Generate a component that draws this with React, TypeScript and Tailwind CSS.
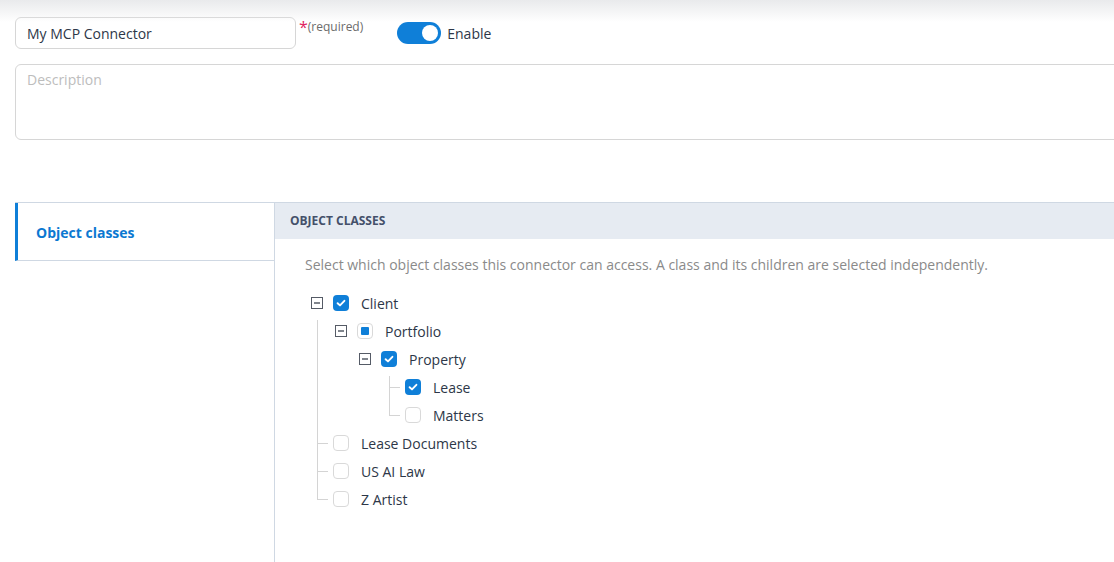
import React from 'react';

type Check = 'on' | 'off' | 'mixed';
type Cell = 'blank' | 'v' | 'vtop' | 'tee' | 'teetop' | 'end' | 'exp';

type Row = { label: string; check: Check; cells: Cell[] };

const rows: Row[] = [
  { label: 'Client', check: 'on', cells: ['exp'] },
  { label: 'Portfolio', check: 'mixed', cells: ['vtop', 'exp'] },
  { label: 'Property', check: 'on', cells: ['v', 'blank', 'exp'] },
  { label: 'Lease', check: 'on', cells: ['v', 'blank', 'blank', 'teetop'] },
  { label: 'Matters', check: 'off', cells: ['v', 'blank', 'blank', 'end'] },
  { label: 'Lease Documents', check: 'off', cells: ['tee'] },
  { label: 'US AI Law', check: 'off', cells: ['tee'] },
  { label: 'Z Artist', check: 'off', cells: ['end'] },
];

// connector lines / expander drawn per 24x28 cell
function TreeCell({ type }: { type: Cell }) {
  const line = '#d4d4d4';
  return (
    <svg width="24" height="28" viewBox="0 0 24 28" className="shrink-0">
      {(type === 'v' || type === 'tee') && <line x1="12.5" y1="0" x2="12.5" y2="28" stroke={line} />}
      {(type === 'vtop' || type === 'teetop') && <line x1="12.5" y1="3" x2="12.5" y2="28" stroke={line} />}
      {type === 'end' && <line x1="12.5" y1="0" x2="12.5" y2="14.5" stroke={line} />}
      {(type === 'tee' || type === 'teetop' || type === 'end') && (
        <line x1="12" y1="14.5" x2="23" y2="14.5" stroke={line} />
      )}
      {type === 'exp' && (
        <g>
          <rect x="6.5" y="8.5" width="11" height="11" fill="#fff" stroke="#555b66" />
          <line x1="9" y1="14" x2="15" y2="14" stroke="#3c4350" strokeWidth="1.3" />
        </g>
      )}
    </svg>
  );
}

function Checkbox({ state }: { state: Check }) {
  if (state === 'on') {
    return (
      <span className="ml-1 flex h-4 w-4 shrink-0 items-center justify-center rounded-[4px] bg-[#0f7fd8]">
        <svg width="12" height="12" viewBox="0 0 12 12">
          <path d="M2.6 6.2 L5 8.4 L9.4 3.8" fill="none" stroke="#fff" strokeWidth="1.9" strokeLinecap="round" strokeLinejoin="round" />
        </svg>
      </span>
    );
  }
  return (
    <span className="ml-1 flex h-4 w-4 shrink-0 items-center justify-center rounded-[4px] border border-[#d9d9d9] bg-white">
      {state === 'mixed' && <span className="h-2 w-2 rounded-[1px] bg-[#0f7fd8]" />}
    </span>
  );
}

function App() {
  return (
    <div className="relative h-[562px] w-[1114px] overflow-hidden bg-white font-['Open_Sans',sans-serif] text-[#2d3748]">
      {/* header shadow from above */}
      <div className="pointer-events-none absolute inset-x-0 top-0 z-10 h-[22px] bg-gradient-to-b from-[#e9eaec] to-white/0" />

      <div className="w-[1200px] pl-[15px] pt-[17px]">
        {/* Name + enable */}
        <div className="flex items-start">
          <div className="flex h-8 w-[281px] items-center rounded-[6px] border border-[#d6d6d6] pl-[11px] text-[14px]">
            My MCP Connector
          </div>
          <span className="ml-[3px] mt-[1px] text-[16px] leading-[18px] text-[#e0245e]">*</span>
          <span className="mt-[2px] text-[12px] leading-[16px] text-[#6b6b6b]">(required)</span>
          <div className="ml-[34px] mt-[5px] flex items-center gap-[6px]">
            <span className="flex h-[22px] w-[44px] items-center justify-end rounded-full bg-[#0f7fd8] px-[3px]">
              <span className="h-4 w-4 rounded-full bg-white" />
            </span>
            <span className="text-[14px]">Enable</span>
          </div>
        </div>

        {/* Description */}
        <div className="mt-[15px] h-[76px] w-full rounded-[6px] border border-[#d6d6d6] pl-[11px] pt-[4px] text-[14px] text-[#bdbdbd]">
          Description
        </div>

        {/* Panels */}
        <div className="mt-[62px] flex h-[400px] border-t border-[#cfd8e3]">
          <div className="w-[260px] shrink-0 border-r border-[#cfd8e3]">
            <div className="flex h-[58px] items-center border-b border-l-[3px] border-b-[#cfd8e3] border-l-[#0f7fd8] pl-[18px] pt-[2px] text-[14px] font-bold text-[#0b78d1]">
              Object classes
            </div>
          </div>
          <div className="flex-1">
            <div className="flex h-[36px] items-center bg-[#e6ebf2] pl-[15px] text-[12px] font-bold text-[#44506a]">
              OBJECT CLASSES
            </div>
            <div className="pl-[30px] pt-[16px]">
              <p className="text-[14px] leading-[20px] text-[#8a8a8a]">
                Select which object classes this connector can access. A class and its children are selected independently.
              </p>
              <div className="mt-[14px] flex flex-col">
                {rows.map((r) => (
                  <div key={r.label} className="flex h-7 items-center">
                    {r.cells.map((c, i) => (
                      <TreeCell key={i} type={c} />
                    ))}
                    <Checkbox state={r.check} />
                    <span className="ml-3 text-[14px]">{r.label}</span>
                  </div>
                ))}
              </div>
            </div>
          </div>
        </div>
      </div>
    </div>
  );
}

export default App;
